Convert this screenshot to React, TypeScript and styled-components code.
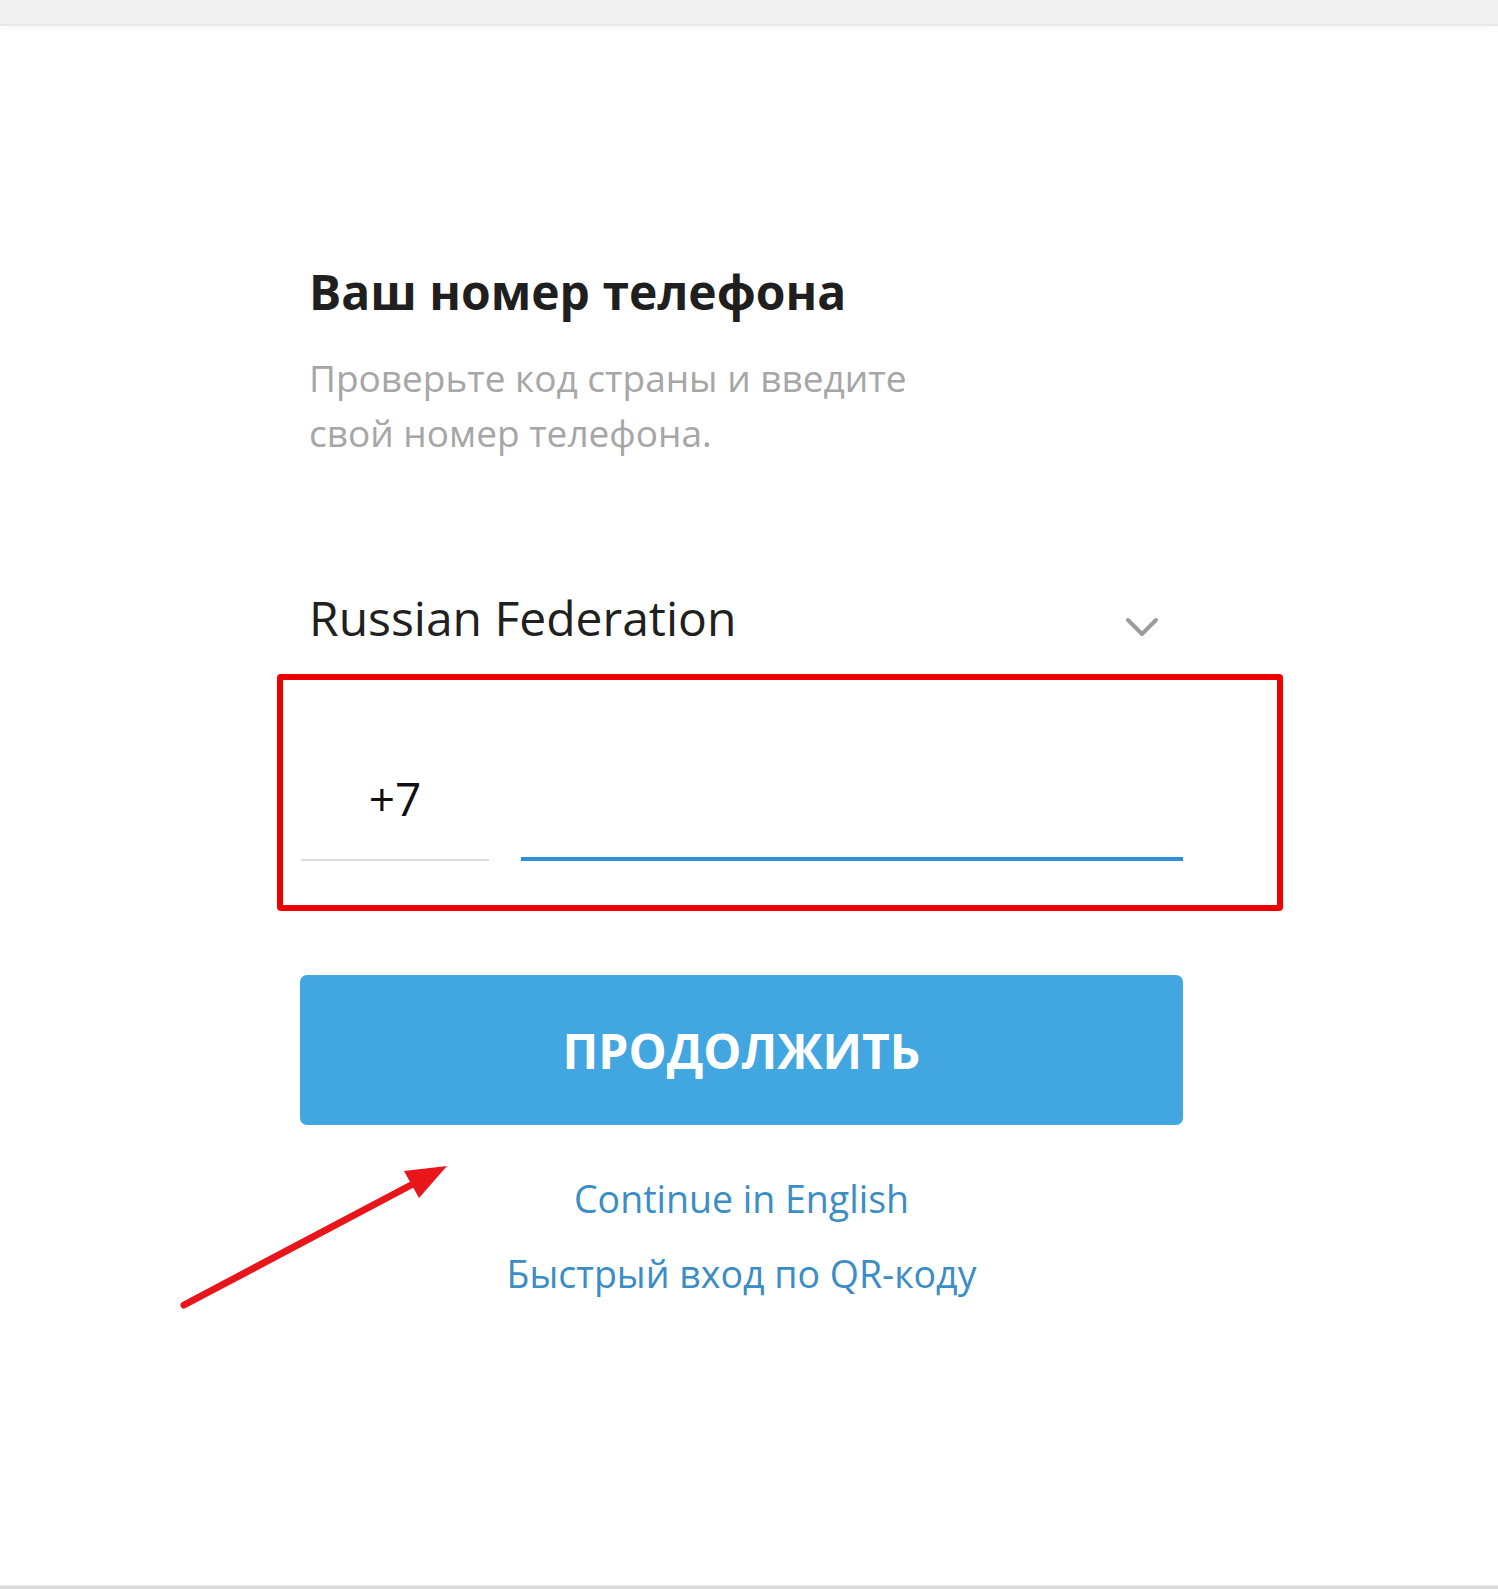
import styled, { createGlobalStyle } from "styled-components";

const GlobalStyle = createGlobalStyle`
  html, body {
    margin: 0;
    padding: 0;
    background: #ffffff;
  }
  body {
    font-family: "Open Sans", "Noto Sans", sans-serif;
  }
`;

export const PageBox = styled.div`
  position: relative;
  min-height: 100vh;
  display: flex;
  flex-direction: column;
  background: #ffffff;
`;

export const TopBar = styled.div`
  height: 24px;
  background-color: #f0f0f0;
  border-bottom: 2px solid #e7e7e7;
  box-shadow: 0 2px 8px rgba(0, 0, 0, 0.03);
`;

export const BottomBar = styled.div`
  height: 3px;
  background-color: #d9d9d9;
  border-top: 1px solid #ececec;
`;

export const Main = styled.main`
  flex: 1;
  padding: 242px 0 0 300px;
`;

export const Column = styled.div`
  width: 883px;
  display: flex;
  flex-direction: column;
`;

export const Title = styled.h1`
  margin: 0;
  padding-left: 9px;
  font-size: 48px;
  line-height: 48px;
  font-weight: 700;
  color: #1f1f1f;
`;

export const Subtitle = styled.p`
  margin: 34px 0 0;
  padding-left: 9px;
  width: 640px;
  font-size: 37px;
  line-height: 55px;
  color: #a6a6a6;
`;

export const CountryRow = styled.div`
  margin-top: 134px;
  padding: 0 24px 0 9px;
  display: flex;
  justify-content: space-between;
  align-items: flex-end;
  height: 48px;
`;

export const CountryName = styled.span`
  font-size: 48px;
  line-height: 48px;
  color: #202020;
`;

export const Chevron = styled.svg`
  width: 34px;
  height: 24px;
  margin-bottom: 3px;
`;

export const Highlight = styled.div`
  margin: 32px 0 0 -23px;
  width: 1006px;
  box-sizing: border-box;
  border: 6px solid #ee0000;
  border-radius: 4px;
  padding: 95px 0 44px 18px;
`;

export const PhoneRow = styled.div`
  display: flex;
  align-items: flex-end;
  gap: 32px;
`;

export const CodeField = styled.div`
  width: 188px;
  padding-bottom: 38px;
  border-bottom: 2px solid #dddddd;
  text-align: center;
  font-size: 46px;
  line-height: 46px;
  color: #111111;
`;

export const NumberField = styled.div`
  width: 662px;
  height: 80px;
  border-bottom: 4px solid #2f8fdb;
`;

export const ContinueButton = styled.button`
  margin-top: 64px;
  height: 150px;
  width: 883px;
  border: none;
  border-radius: 7px;
  background-color: #42a6e0;
  color: #ffffff;
  font-family: "Open Sans", sans-serif;
  font-size: 48px;
  font-weight: 700;
  cursor: pointer;
`;

export const LinkText = styled.a<{ $first?: boolean }>`
  display: block;
  margin-top: ${(p) => (p.$first ? "55px" : "38px")};
  text-align: center;
  font-size: 37.5px;
  line-height: 37px;
  color: #3b8dc5;
  text-decoration: none;
  cursor: pointer;
`;

export const ArrowMark = styled.svg`
  position: absolute;
  left: 170px;
  top: 1150px;
  width: 300px;
  height: 170px;
  pointer-events: none;
`;

export default function App() {
  return (
    <>
      <GlobalStyle />
      <PageBox>
        <TopBar />
        <Main>
          <Column>
            <Title>Ваш номер телефона</Title>
            <Subtitle>
              Проверьте код страны и введите свой номер телефона.
            </Subtitle>

            <CountryRow>
              <CountryName>Russian Federation</CountryName>
              <Chevron viewBox="0 0 34 24">
                <polyline
                  points="3,5 17,19 31,5"
                  fill="none"
                  stroke="#9b9b9b"
                  strokeWidth="4"
                  strokeLinecap="round"
                  strokeLinejoin="round"
                />
              </Chevron>
            </CountryRow>

            <Highlight>
              <PhoneRow>
                <CodeField>+7</CodeField>
                <NumberField />
              </PhoneRow>
            </Highlight>

            <ContinueButton>ПРОДОЛЖИТЬ</ContinueButton>

            <LinkText $first>Continue in English</LinkText>
            <LinkText>Быстрый вход по QR-коду</LinkText>
          </Column>
        </Main>
        <BottomBar />

        <ArrowMark viewBox="0 0 300 170">
          <line
            x1="14"
            y1="155"
            x2="243"
            y2="34"
            stroke="#e8151b"
            strokeWidth="7"
            strokeLinecap="round"
          />
          <polygon points="277,16 249,48 234,21" fill="#e8151b" />
        </ArrowMark>
      </PageBox>
    </>
  );
}
